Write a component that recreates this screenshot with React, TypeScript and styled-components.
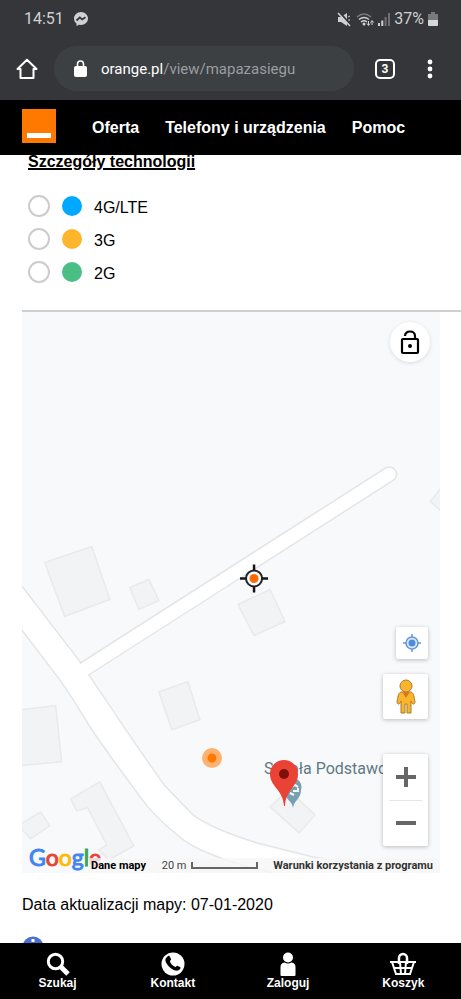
import React from "react";
import styled, { createGlobalStyle } from "styled-components";

const GlobalStyle = createGlobalStyle`
  *, *::before, *::after { box-sizing: border-box; }
  body { margin: 0; background: #fff; }
  button, input { font: inherit; margin: 0; }
  svg { display: block; flex: none; }
`;

const helvetica = `"Liberation Sans", Arial, sans-serif`;
const roboto = `Roboto, sans-serif`;

const Shell = styled.div`
  height: 100vh;
  display: flex;
  flex-direction: column;
  font-family: ${helvetica};
  color: #000;
`;

const StatusBar = styled.div`
  flex: none;
  height: 38px;
  padding: 0 23px 0 24px;
  display: flex;
  align-items: center;
  background: #35363a;
  color: #cfd0d2;
  font: 400 16px/20px ${roboto};
`;

const Clock = styled.span`
  margin-right: 10px;
`;

const StatusIcons = styled.div`
  margin-left: auto;
  display: flex;
  align-items: center;
  gap: 4px;
`;

const BrowserBar = styled.div`
  flex: none;
  height: 62px;
  padding: 0 20px 1px 16px;
  display: flex;
  align-items: center;
  gap: 16px;
  background: #35363a;
`;

const IconButton = styled.button`
  flex: none;
  display: flex;
  align-items: center;
  justify-content: center;
  padding: 0;
  border: 0;
  background: none;
  color: #fff;
`;

const AddressBox = styled.div`
  flex: 1;
  min-width: 0;
  height: 45px;
  padding: 0 20px;
  display: flex;
  align-items: center;
  gap: 14px;
  border-radius: 23px;
  background: #3c4043;
`;

const Address = styled.a`
  color: #9a9da1;
  text-decoration: none;
  font: 400 15px/20px ${roboto};
  strong {
    color: #fff;
    font-weight: 400;
  }
`;

const TabCount = styled(IconButton)`
  width: 20px;
  height: 20px;
  margin-left: 5px;
  border: 2px solid #fff;
  border-radius: 5px;
  font: 700 12px/12px ${roboto};
`;

const SiteHeader = styled.header`
  flex: none;
  position: relative;
  z-index: 1;
  height: 55px;
  padding: 0 22px;
  display: flex;
  align-items: center;
  background: #000;
`;

const Logo = styled.a`
  display: block;
  margin: 0 36px 4px 0;
`;

const SiteNav = styled.nav`
  display: flex;
  gap: 26px;
`;

const SiteLink = styled.a`
  color: #fff;
  font-size: 16px;
  line-height: 20px;
  font-weight: 700;
  text-decoration: none;
`;

const Content = styled.main`
  flex: 1;
  min-height: 0;
  margin-top: -4px;
  padding-left: 22px;
  overflow: auto;
  scrollbar-width: none;
`;

const Technology = styled.fieldset`
  margin: 0;
  padding: 0 6px 22px;
  border: 0;
  border-bottom: 2px solid #cfcfcf;
`;

const Legend = styled.legend`
  padding: 1px 0 0;
  margin-bottom: 17px;
  font-size: 16px;
  line-height: 20px;
  font-weight: 700;
  text-decoration: underline;
  text-decoration-thickness: 2px;
`;

const Option = styled.label`
  height: 33px;
  display: flex;
  align-items: center;
  gap: 12px;
  font-size: 16px;
  line-height: 20px;
`;

const Radio = styled.input`
  appearance: none;
  width: 22px;
  height: 22px;
  border: 2px solid #ccc;
  border-radius: 50%;
  background: #fff;
  &:checked {
    border: 6px solid #ff7900;
  }
`;

const Dot = styled.span<{ $color: string }>`
  width: 20px;
  height: 20px;
  border-radius: 50%;
  background: ${(p) => p.$color};
`;

const OptionText = styled.span`
  padding-top: 4px;
`;

const MapPanel = styled.section`
  position: relative;
  height: 561px;
  margin-right: 21px;
  overflow: hidden;
  background: #f8f9fb;
`;

const MapDrawing = styled.svg`
  width: 100%;
  height: 100%;
`;

const PlaceLabel = styled.span`
  position: absolute;
  left: 242px;
  top: 447px;
  color: #5f7a84;
  font: 400 16px/20px ${roboto};
  white-space: nowrap;
`;

const Pins = styled.svg`
  position: absolute;
  left: 180px;
  top: 431px;
`;

const Controls = styled.div`
  position: absolute;
  top: 10px;
  right: 10px;
  bottom: 27px;
  display: flex;
  flex-direction: column;
  align-items: flex-end;
`;

const MapButton = styled.button<{ $size: number; $round?: boolean }>`
  width: ${(p) => p.$size}px;
  height: ${(p) => p.$size}px;
  padding: 0;
  display: flex;
  align-items: center;
  justify-content: center;
  border: 0;
  border-radius: ${(p) => (p.$round ? "50%" : "2px")};
  background: #fff;
  box-shadow: 0 1px 4px ${(p) => (p.$round ? "rgba(0, 0, 0, 0.12)" : "rgba(0, 0, 0, 0.25)")};
`;

const LowerControls = styled.div`
  margin: auto 2px 0 0;
  display: flex;
  flex-direction: column;
  align-items: flex-end;
  gap: 15px;
`;

const ZoomGroup = styled.div`
  width: 45px;
  margin-top: 20px;
  border-radius: 2px;
  background: #fff;
  box-shadow: 0 1px 4px rgba(0, 0, 0, 0.25);
`;

const ZoomButton = styled.button`
  width: 100%;
  height: 46px;
  padding: 0;
  display: flex;
  align-items: center;
  justify-content: center;
  border: 0;
  background: none;
  & + &::before {
    content: "";
    position: absolute;
    width: 33px;
    height: 1px;
    margin-bottom: 46px;
    background: #e6e6e6;
  }
`;

const GoogleMark = styled.a`
  position: absolute;
  left: 7px;
  bottom: 2px;
  font: 400 23px/28px Lato, sans-serif;
  text-decoration: none;
  -webkit-text-stroke: 1px;
`;

const Letter = styled.span<{ $color: string }>`
  color: ${(p) => p.$color};
`;

const Attribution = styled.div`
  position: absolute;
  left: 66px;
  right: 0;
  bottom: 0;
  height: 15px;
  padding: 0 7px 0 3px;
  display: flex;
  align-items: center;
  background: rgba(246, 246, 247, 0.8);
  color: #444;
  font: 400 11px/15px ${roboto};
  white-space: nowrap;
`;

const AttributionLink = styled.a<{ $dark?: boolean }>`
  color: ${(p) => (p.$dark ? "#000" : "#333")};
  font-weight: 700;
  text-decoration: none;
`;

const Scale = styled.span`
  margin: 0 auto;
  display: flex;
  align-items: center;
  gap: 4px;
`;

const ScaleLine = styled.span`
  width: 67px;
  height: 7px;
  border: 2px solid #666;
  border-top: 0;
`;

const Updated = styled.p`
  margin: 21px 0 20px;
  font-size: 16px;
  line-height: 22px;
`;

const BottomNav = styled.nav`
  flex: none;
  height: 56px;
  padding-top: 9px;
  display: grid;
  grid-template-columns: repeat(4, 1fr);
  background: #000;
`;

const BottomLink = styled.a`
  display: flex;
  flex-direction: column;
  align-items: center;
  color: #fff;
  font-size: 12px;
  line-height: 14px;
  font-weight: 700;
  text-decoration: none;
`;

const technologies = [
  { id: "lte", label: "4G/LTE", color: "#00a9ff" },
  { id: "3g", label: "3G", color: "#fdb62b" },
  { id: "2g", label: "2G", color: "#4bbe86" },
];

const buildings = [
  "23,250 70,234 88,287 43,304",
  "108,275 127,267 137,288 117,297",
  "137,379 166,369 178,407 150,417",
  "-2,397 34,393 40,449 -2,453",
  "49,486 78,469 112,533 87,547 77,537 85,532 66,495 55,498",
  "-2,512 19,499 28,513 9,526 -2,514",
  "216,292 248,277 263,309 232,323",
  "408,189 420,174 420,200",
  "248,494 266,477 293,502 277,520",
];

const mark: [string, string][] = [
  ["G", "#4285f4"],
  ["o", "#ea4335"],
  ["o", "#fbbc05"],
  ["g", "#4285f4"],
  ["l", "#34a853"],
  ["e", "#ea4335"],
];

function StatusGlyphs() {
  return (
    <>
      <svg width="15" height="15" viewBox="0 0 15 15" fill="#cfd0d2">
        <path d="M1 5h3l6-4v13l-6-4H1z" />
        <path d="M11 5l2-1M11 8h2" stroke="#cfd0d2" />
        <path d="M2.500 0l11 13" stroke="#35363a" strokeWidth="2" />
        <path d="M1 1l12 13" stroke="#cfd0d2" strokeWidth="1.500" />
      </svg>
      <svg width="18" height="15" viewBox="0 0 18 15" fill="none" strokeWidth="1.500">
        <path d="M1 5q7-6 14 0" stroke="#77797c" />
        <path d="M3 7.500q5-4 10 0M5 10q3-2.500 6 0" stroke="#cfd0d2" />
        <circle cx="8" cy="12" r="1.500" fill="#cfd0d2" />
        <path d="M12.500 9v4m-1.500-1.500 1.500 2 1.500-2M16 13V9m-1.500 1.500L16 8.500l1.500 2" stroke="#cfd0d2" strokeWidth="1" />
      </svg>
      <svg width="12" height="13" viewBox="0 0 12 13">
        <path d="M0 10h2v3H0zM3.300 7.500h2V13h-2z" fill="#cfd0d2" />
        <path d="M6.600 4h2v9h-2zM10 0h2v13h-2z" fill="#6d6f72" />
      </svg>
    </>
  );
}

function Crosshair({ x, y }: { x: number; y: number }) {
  return (
    <g transform={`translate(${x} ${y})`}>
      <circle r="8" fill="#fff" stroke="#24242c" strokeWidth="2" />
      <circle r="4.500" fill="#ff6a00" />
      <path d="M0-14v6M0 8v6M-14 0h6M8 0h6" stroke="#15151f" strokeWidth="2.500" />
    </g>
  );
}

function CoverageMap() {
  return (
    <MapPanel aria-label="Mapa zasięgu">
      <MapDrawing viewBox="0 0 418 560" preserveAspectRatio="xMidYMid slice" aria-hidden="true">
        <g fill="#f1f3f4" stroke="#e8eaeb" strokeWidth="1.500">
          {buildings.map((points) => (
            <polygon key={points} points={points} />
          ))}
        </g>
        <path
          d="M-4 268 59 350 67 362 Q115 434 143 473 L171 502 Q190 516 235 530 L291 544 430 568 V590 H320 L245 558 Q215 552 191 542 Q165 532 153 520 Q139 509 126 494 Q100 460 70 417 Q52 387 38 367 L-4 312Z"
          fill="#fff"
          stroke="#e3e5e7"
          strokeWidth="1.500"
        />
        <path d="M63 356 367 162" stroke="#e3e5e7" strokeWidth="16" strokeLinecap="round" />
        <path d="M54 362 367 162" stroke="#fff" strokeWidth="13" strokeLinecap="round" />
        <path d="M42 340 90 410" stroke="#fff" strokeWidth="14" />
        <Crosshair x={232} y={266} />
      </MapDrawing>

      <PlaceLabel>Szkoła Podstawowa</PlaceLabel>
      <Pins width="110" height="70" viewBox="0 0 110 70" aria-hidden="true">
        <circle cx="10" cy="15" r="10" fill="#ffb270" />
        <circle cx="10" cy="15" r="4.500" fill="#ff7900" />
        <path d="M91 65c-1-8-9-9-9-18a9 9 0 1 1 17 0c0 9-7 10-8 18z" fill="#78a0b3" />
        <path d="M86 45l7-3 3 2M91 48h5v-3M88 50l4 2" stroke="#fff" strokeWidth="2" fill="none" />
        <path d="M82 63c-1-17-14-19-14-32a14 14 0 0 1 28 0c0 13-12 15-13 32z" fill="#ea4335" />
        <circle cx="82" cy="31" r="5" fill="#7d100b" />
      </Pins>

      <GoogleMark href="#google" aria-label="Google">
        {mark.map(([char, color], i) => (
          <Letter key={i} $color={color}>{char}</Letter>
        ))}
      </GoogleMark>
      <Attribution>
        <AttributionLink href="#dane" $dark>Dane mapy</AttributionLink>
        <Scale>
          20 m
          <ScaleLine />
        </Scale>
        <AttributionLink href="#warunki">Warunki korzystania z programu</AttributionLink>
      </Attribution>

      <Controls>
        <MapButton $size={40} $round aria-label="Odblokuj mapę">
          <svg width="20" height="26" viewBox="0 0 20 26" fill="none" stroke="#000" strokeWidth="2.200">
            <rect x="2" y="10" width="16" height="14" rx="1" />
            <path d="M5 7c0-6 10-6 10 0v3" />
            <circle cx="10" cy="17" r="2" fill="#000" stroke="none" />
          </svg>
        </MapButton>
        <LowerControls>
          <MapButton $size={32} aria-label="Moja lokalizacja">
            <svg width="18" height="18" viewBox="0 0 18 18" fill="none" stroke="#6497db" strokeWidth="1.500">
              <circle cx="9" cy="9" r="6" fill="#dceafe" />
              <circle cx="9" cy="9" r="3.500" fill="#508be0" stroke="none" />
              <path d="M9 0v3M9 15v3M0 9h3M15 9h3" />
            </svg>
          </MapButton>
          <MapButton $size={45} aria-label="Street View">
            <svg width="20" height="36" viewBox="0 0 20 36" fill="#fbb52b" stroke="#a77a32" strokeWidth="1">
              <path d="M5 13h10c3 1 3 5 4 10 0 2-2 3-3 1l-1-2v12h-4v-9H9v9H5V22l-1 2c-1 2-3 1-3-1 1-5 1-9 4-10z" />
              <circle cx="10" cy="7" r="6" />
              <path d="M6.500 13.500h7L10 19z" fill="#dc7620" stroke="none" />
            </svg>
          </MapButton>
          <ZoomGroup>
            <ZoomButton aria-label="Powiększ">
              <svg width="20" height="20" viewBox="0 0 20 20">
                <path d="M8 0h4v8h8v4h-8v8H8v-8H0V8h8z" fill="#666" />
              </svg>
            </ZoomButton>
            <ZoomButton aria-label="Pomniejsz">
              <svg width="20" height="20" viewBox="0 0 20 20">
                <path d="M0 8h20v4H0z" fill="#666" />
              </svg>
            </ZoomButton>
          </ZoomGroup>
        </LowerControls>
      </Controls>
    </MapPanel>
  );
}

export default function App() {
  return (
    <Shell>
      <GlobalStyle />
      <StatusBar>
        <Clock>14:51</Clock>
        <svg width="14" height="14" viewBox="0 0 14 14">
          <path d="M7 0c4 0 7 3 7 6.500S11 13 7 13l-2-.3L2.500 14v-2.500C1 10.500 0 8.500 0 6.500 0 3 3 0 7 0z" fill="#cfd0d2" />
          <path d="M2.500 8.500l3.300-3 2.400 2 3.300-2.300" fill="none" stroke="#35363a" strokeWidth="1.700" />
        </svg>
        <StatusIcons>
          <StatusGlyphs />
          <span>37%</span>
          <svg width="10" height="14" viewBox="0 0 10 14">
            <path d="M3 0h4v2h3v6H0V2h3z" fill="#77797c" />
            <path d="M0 8h10v5q0 1-1 1H1q-1 0-1-1z" fill="#d5d6d7" />
          </svg>
        </StatusIcons>
      </StatusBar>

      <BrowserBar>
        <IconButton aria-label="Strona główna">
          <svg width="22" height="22" viewBox="0 0 22 22" fill="none" stroke="#fff" strokeWidth="2">
            <path d="M1.500 11 11 1.800 20.500 11H17.500V20H4.500V11z" strokeLinejoin="round" />
          </svg>
        </IconButton>
        <AddressBox>
          <svg width="13" height="17" viewBox="0 0 13 17">
            <rect y="6" width="13" height="11" rx="2" fill="#fff" />
            <path d="M3.500 7V4a3 3 0 0 1 6 0v3" fill="none" stroke="#fff" strokeWidth="1.600" />
          </svg>
          <Address href="#adres">
            <strong>orange.pl</strong>/view/mapazasiegu
          </Address>
        </AddressBox>
        <TabCount aria-label="Otwarte karty: 3">3</TabCount>
        <IconButton aria-label="Menu">
          <svg width="30" height="20" viewBox="0 0 30 20" fill="#fff">
            <circle cx="19" cy="3" r="2.400" />
            <circle cx="19" cy="10" r="2.400" />
            <circle cx="19" cy="17" r="2.400" />
          </svg>
        </IconButton>
      </BrowserBar>

      <SiteHeader>
        <Logo href="#orange" aria-label="Orange">
          <svg width="34" height="34" viewBox="0 0 34 34">
            <path d="M0 0h34v34H0z" fill="#ff7900" />
            <path d="M5 24h24v5H5z" fill="#fff" />
          </svg>
        </Logo>
        <SiteNav>
          <SiteLink href="#oferta">Oferta</SiteLink>
          <SiteLink href="#telefony">Telefony i urządzenia</SiteLink>
          <SiteLink href="#pomoc">Pomoc</SiteLink>
        </SiteNav>
      </SiteHeader>

      <Content>
        <Technology>
          <Legend>Szczegóły technologii</Legend>
          {technologies.map((t) => (
            <Option key={t.id} htmlFor={t.id}>
              <Radio type="radio" name="technology" id={t.id} />
              <Dot $color={t.color} />
              <OptionText>{t.label}</OptionText>
            </Option>
          ))}
        </Technology>
        <CoverageMap />
        <Updated>Data aktualizacji mapy: 07-01-2020</Updated>
        <svg width="22" height="22" viewBox="0 0 22 22">
          <circle cx="11" cy="11" r="10.500" fill="#4a6fd0" />
          <path d="M9.500 3h3v3h-3zM9.500 8h3v9h-3z" fill="#fff" />
        </svg>
      </Content>

      <BottomNav>
        <BottomLink href="#szukaj">
          <svg width="24" height="24" viewBox="0 0 24 24" fill="none" stroke="#fff">
            <circle cx="9.500" cy="9.500" r="7.200" strokeWidth="3" />
            <path d="M14.500 14.500l7.500 7.500" strokeWidth="5" />
          </svg>
          Szukaj
        </BottomLink>
        <BottomLink href="#kontakt">
          <svg width="24" height="24" viewBox="0 0 24 24">
            <circle cx="12" cy="12" r="11.500" fill="#fff" />
            <path d="M5 6l2-2c1-.6 1.500 0 2 1l1 2c.4 1-.8 1.500-1 2 0 2 3 5 5.500 6 .8 0 1-1.500 2-1.200l2.500 1.200c1 .7.700 1.300 0 2-2 2.500-5 2-8 0-3-2-6-5.500-6.500-8-.2-1.200 0-2.300.500-3z" fill="#000" />
          </svg>
          Kontakt
        </BottomLink>
        <BottomLink href="#zaloguj">
          <svg width="24" height="24" viewBox="0 0 24 24" fill="#fff">
            <circle cx="12" cy="5.500" r="5" />
            <path d="M4.500 15q0-4 4-4.500 3.500 2 7 0 4 .5 4 4.500v8q0 1-1 1h-13q-1 0-1-1z" />
          </svg>
          Zaloguj
        </BottomLink>
        <BottomLink href="#koszyk">
          <svg width="26" height="24" viewBox="0 0 26 24" fill="none" stroke="#fff" strokeWidth="2">
            <path d="M0 10h26M2 10l4 12h14l4-12M4 16h18M10 10l1 12M16 10l-1 12" />
            <path d="M9 12V6a4 4 0 0 1 8 0v6" strokeWidth="2.500" />
          </svg>
          Koszyk
        </BottomLink>
      </BottomNav>
    </Shell>
  );
}
